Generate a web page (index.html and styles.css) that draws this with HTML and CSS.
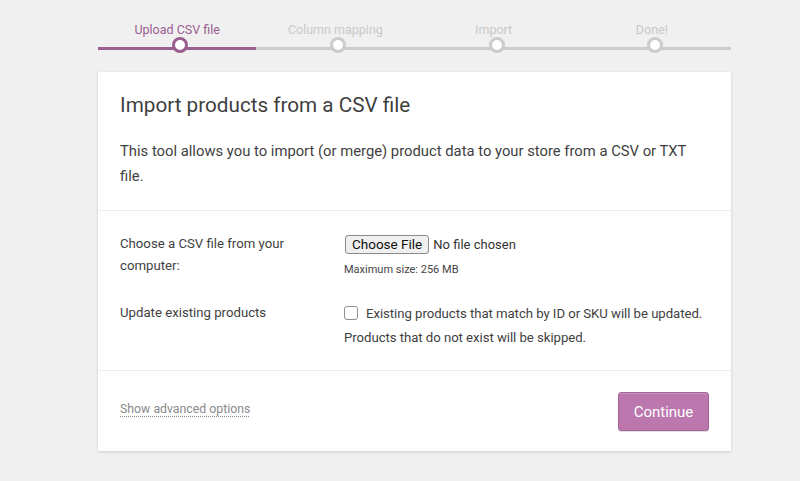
FILE: index.html
```html
<!DOCTYPE html>
<html lang="en">
<head>
<meta charset="utf-8">
<title>Import products from a CSV file</title>
<link rel="stylesheet" href="styles.css">
</head>
<body>
<div class="wrap">
  <ol class="steps">
    <li class="step active">Upload CSV file</li>
    <li class="step">Column mapping</li>
    <li class="step">Import</li>
    <li class="step">Done!</li>
  </ol>
  <form class="card">
    <header class="card-head">
      <h2 class="title">Import products from a CSV file</h2>
      <p class="intro">This tool allows you to import (or merge) product data to your store from a CSV or TXT file.</p>
    </header>
    <section class="card-body">
      <div class="row">
        <div class="label">Choose a CSV file from your computer:</div>
        <div class="field">
          <div class="file">
            <button type="button" class="file-btn">Choose File</button>
            <span class="file-name">No file chosen</span>
          </div>
          <div class="hint">Maximum size: 256 MB</div>
        </div>
      </div>
      <div class="row row-update">
        <div class="label">Update existing products</div>
        <div class="field check-text">
          <span class="checkbox"></span>Existing products that match by ID or SKU will be updated. Products that do not exist will be skipped.
        </div>
      </div>
    </section>
    <footer class="card-foot">
      <a class="advanced" href="#">Show advanced options</a>
      <button type="button" class="continue">Continue</button>
    </footer>
  </form>
</div>
</body>
</html>
```

FILE: styles.css
```css
* { box-sizing: border-box; }
html, body { margin: 0; padding: 0; }
body {
  background: #f0f0f0;
  font-family: Roboto, "Noto Sans", Arial, sans-serif;
  color: #3c3c3c;
  width: 800px;
  height: 481px;
  overflow: hidden;
}
.wrap {
  width: 633px;
  margin-left: 98px;
  padding-top: 21px;
}
.steps {
  list-style: none;
  margin: 0 0 22px;
  padding: 0;
  display: flex;
}
.step {
  flex: 1;
  position: relative;
  text-align: center;
  font-size: 12.5px;
  line-height: 18px;
  padding-bottom: 8px;
  color: #c8c8c8;
  border-bottom: 3px solid #cccccc;
}
.step::before {
  content: "";
  position: absolute;
  left: 50%;
  bottom: -6px;
  margin-left: -5px;
  width: 10px;
  height: 10px;
  border: 3px solid #cccccc;
  border-radius: 50%;
  background: #fff;
}
.step.active {
  color: #9a5e91;
  border-bottom-color: #9a5e91;
}
.step.active::before { border-color: #9a5e91; }

.card {
  display: block;
  background: #fff;
  box-shadow: 0 1px 3px rgba(0,0,0,.14);
  margin: 0;
}
.card-head {
  padding: 21px 22px 0;
  border-bottom: 1px solid #eeeeee;
}
.title {
  margin: 0;
  font-size: 20.7px;
  font-weight: 400;
  line-height: 24px;
  color: #3f3f3f;
}
.intro {
  margin: 22px 0 0;
  padding-bottom: 21px;
  font-size: 14.8px;
  line-height: 25px;
  color: #3f3f3f;
}
.card-body {
  padding: 22px 22px 20px;
  border-bottom: 1px solid #eeeeee;
}
.row {
  display: grid;
  grid-template-columns: 224px 1fr;
}
.row-update { margin-top: 25px; }
.label {
  font-size: 13.2px;
  line-height: 22px;
  color: #3f3f3f;
  padding-right: 40px;
}
.field { font-size: 13.2px; color: #3f3f3f; }
.file {
  display: flex;
  align-items: center;
  height: 22px;
}
.file-btn {
  font-family: inherit;
  font-size: 13.5px;
  line-height: 17px;
  height: 19px;
  padding: 0 6px;
  margin: 0 4px 0 1px;
  color: #111;
  background: #efefef;
  border: 1px solid #8a8a8a;
  border-radius: 3px;
}
.file-name { font-size: 13px; color: #333; }
.hint {
  font-size: 11px;
  line-height: 14px;
  margin-top: 8px;
  color: #444;
}
.check-text {
  line-height: 24px;
  letter-spacing: -0.05px;
}
.checkbox {
  display: inline-block;
  width: 14px;
  height: 14px;
  border: 1px solid #8f8f8f;
  border-radius: 3px;
  vertical-align: -2px;
  margin-right: 8px;
  background: #fff;
}
.card-foot {
  display: flex;
  justify-content: space-between;
  align-items: center;
  padding: 21px 22px 20px;
}
.advanced {
  font-size: 12.3px;
  color: #8a8a8a;
  text-decoration: underline dotted;
  text-underline-offset: 3px;
  margin-bottom: 5px;
}
.continue {
  font-family: inherit;
  font-size: 15px;
  color: #fff;
  background: #bb77ae;
  border: 1px solid #a36597;
  border-radius: 3px;
  width: 91px;
  height: 39px;
  padding: 0;
  box-shadow: inset 0 1px 0 rgba(255,255,255,.2), 0 1px 0 rgba(0,0,0,.12);
}
```
